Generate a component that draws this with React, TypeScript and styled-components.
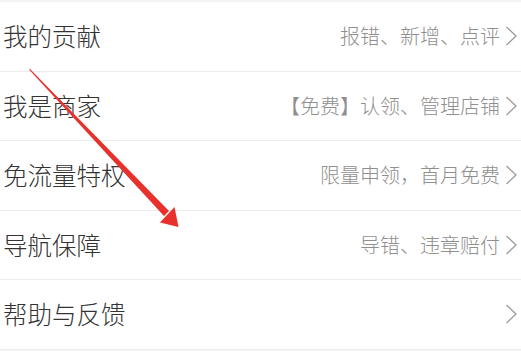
import React from "react";
import styled, { createGlobalStyle } from "styled-components";

// Style

const GlobalStyle = createGlobalStyle`
  html, body {
    margin: 0;
    padding: 0;
    background-color: #f4f4f4;
  }
  body {
    font-family: "Noto Sans CJK SC", "Noto Sans", sans-serif;
  }
`;

const Page = styled.div`
  position: relative;
  width: 521px;
  height: 351px;
  overflow: hidden;
  padding-top: 2px;
  box-sizing: border-box;
  background-color: #f4f4f4;
`;

const List = styled.div`
  display: flex;
  flex-direction: column;
  background-color: #ffffff;
`;

const Row = styled.div`
  height: 69.5px;
  box-sizing: border-box;
  display: flex;
  flex-direction: row;
  align-items: center;
  padding-left: 3px;
  padding-right: 3px;
  border-bottom: 1px solid #ececec;
`;

const Title = styled.div`
  flex: 1;
  font-size: 24.5px;
  font-weight: 300;
  color: #333333;
  line-height: 1;
  white-space: nowrap;
`;

const Hint = styled.div`
  font-size: 20px;
  font-weight: 300;
  color: #8f8f8f;
  line-height: 1;
  white-space: nowrap;
  margin-right: 5px;
`;

const Chevron = styled.svg`
  width: 13px;
  height: 22px;
  flex-shrink: 0;
`;

const Overlay = styled.svg`
  position: absolute;
  left: 0;
  top: 0;
  width: 521px;
  height: 351px;
  pointer-events: none;
`;

// data

const items = [
  { title: "我的贡献", hint: "报错、新增、点评" },
  { title: "我是商家", hint: "【免费】认领、管理店铺" },
  { title: "免流量特权", hint: "限量申领，首月免费" },
  { title: "导航保障", hint: "导错、违章赔付" },
  { title: "帮助与反馈", hint: "" },
];

// render

export default function App() {
  return (
    <>
      <GlobalStyle />
      <Page>
        <List>
          {items.map((item) => (
            <Row key={item.title}>
              <Title>{item.title}</Title>
              {item.hint && <Hint>{item.hint}</Hint>}
              <Chevron viewBox="0 0 13 22">
                <polyline
                  points="1.5,2 11,11 1.5,20"
                  fill="none"
                  stroke="#9a9a9a"
                  strokeWidth="1.3"
                />
              </Chevron>
            </Row>
          ))}
        </List>
        <Overlay viewBox="0 0 521 351">
          <polygon
            points="29,69.5 30,69 169,211 164,216"
            fill="#e8302c"
          />
          <polygon points="160,222.5 174.5,207 178.5,227" fill="#e8302c" />
        </Overlay>
      </Page>
    </>
  );
}
